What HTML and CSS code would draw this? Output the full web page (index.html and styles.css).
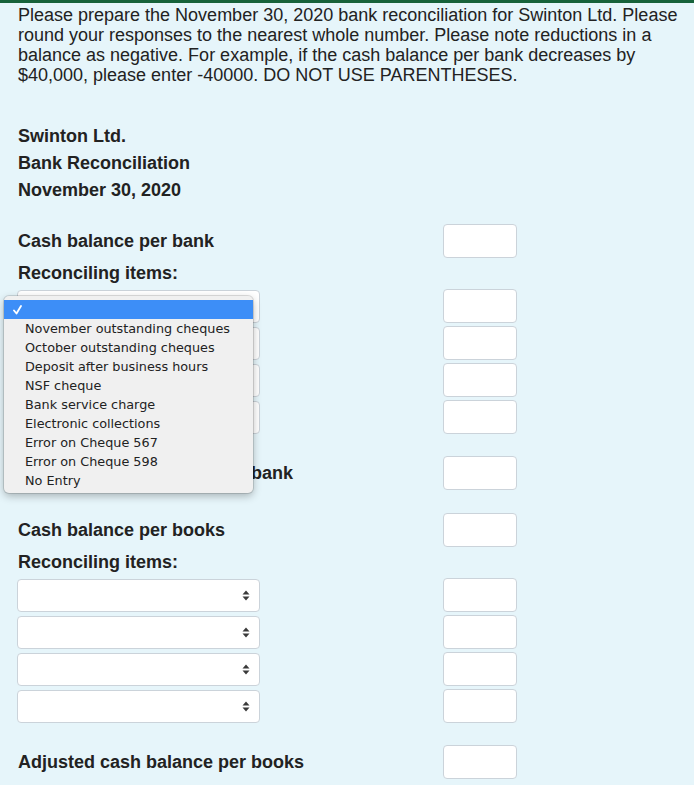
FILE: index.html
```html
<!DOCTYPE html>
<html>
<head>
<meta charset="utf-8">
<link rel="stylesheet" href="styles.css">
</head>
<body>
<div class="page">
  <p class="intro">Please prepare the November 30, 2020 bank reconciliation for Swinton Ltd. Please round your responses to the nearest whole number. Please note reductions in a balance as negative. For example, if the cash balance per bank decreases by $40,000, please enter -40000. DO NOT USE PARENTHESES.</p>

  <div class="heading">
    <div>Swinton Ltd.</div>
    <div>Bank Reconciliation</div>
    <div>November 30, 2020</div>
  </div>

  <div class="form">
    <div class="row first"><span class="label">Cash balance per bank</span><input class="amount" type="text"></div>
    <div class="label-row"><span class="label">Reconciling items:</span></div>
    <div class="group">
      <div class="row"><span class="sel"><select></select><svg class="arrows" width="8" height="11" viewBox="0 0 8 11"><path d="M4 0.5 L7.5 4.5 L0.5 4.5 Z M4 10.5 L7.5 6.5 L0.5 6.5 Z" fill="#3a3a3a"/></svg></span><input class="amount" type="text"></div>
      <div class="row"><span class="sel"><select></select><svg class="arrows" width="8" height="11" viewBox="0 0 8 11"><path d="M4 0.5 L7.5 4.5 L0.5 4.5 Z M4 10.5 L7.5 6.5 L0.5 6.5 Z" fill="#3a3a3a"/></svg></span><input class="amount" type="text"></div>
      <div class="row"><span class="sel"><select></select><svg class="arrows" width="8" height="11" viewBox="0 0 8 11"><path d="M4 0.5 L7.5 4.5 L0.5 4.5 Z M4 10.5 L7.5 6.5 L0.5 6.5 Z" fill="#3a3a3a"/></svg></span><input class="amount" type="text"></div>
      <div class="row"><span class="sel"><select></select><svg class="arrows" width="8" height="11" viewBox="0 0 8 11"><path d="M4 0.5 L7.5 4.5 L0.5 4.5 Z M4 10.5 L7.5 6.5 L0.5 6.5 Z" fill="#3a3a3a"/></svg></span><input class="amount" type="text"></div>
    </div>
    <div class="row spaced"><span class="label">Adjusted cash balance per bank</span><input class="amount" type="text"></div>
    <div class="row spaced"><span class="label">Cash balance per books</span><input class="amount" type="text"></div>
    <div class="label-row"><span class="label">Reconciling items:</span></div>
    <div class="group">
      <div class="row"><span class="sel"><select></select><svg class="arrows" width="8" height="11" viewBox="0 0 8 11"><path d="M4 0.5 L7.5 4.5 L0.5 4.5 Z M4 10.5 L7.5 6.5 L0.5 6.5 Z" fill="#3a3a3a"/></svg></span><input class="amount" type="text"></div>
      <div class="row"><span class="sel"><select></select><svg class="arrows" width="8" height="11" viewBox="0 0 8 11"><path d="M4 0.5 L7.5 4.5 L0.5 4.5 Z M4 10.5 L7.5 6.5 L0.5 6.5 Z" fill="#3a3a3a"/></svg></span><input class="amount" type="text"></div>
      <div class="row"><span class="sel"><select></select><svg class="arrows" width="8" height="11" viewBox="0 0 8 11"><path d="M4 0.5 L7.5 4.5 L0.5 4.5 Z M4 10.5 L7.5 6.5 L0.5 6.5 Z" fill="#3a3a3a"/></svg></span><input class="amount" type="text"></div>
      <div class="row"><span class="sel"><select></select><svg class="arrows" width="8" height="11" viewBox="0 0 8 11"><path d="M4 0.5 L7.5 4.5 L0.5 4.5 Z M4 10.5 L7.5 6.5 L0.5 6.5 Z" fill="#3a3a3a"/></svg></span><input class="amount" type="text"></div>
    </div>
    <div class="row spaced"><span class="label">Adjusted cash balance per books</span><input class="amount" type="text"></div>
  </div>

  <ul class="popup">
    <li class="opt selected"><svg class="check" width="9" height="10" viewBox="0 0 9 10"><path d="M1 5.5 L3.5 8.5 L8 1" fill="none" stroke="#fff" stroke-width="1.8" stroke-linecap="round" stroke-linejoin="round"/></svg></li>
    <li class="opt">November outstanding cheques</li>
    <li class="opt">October outstanding cheques</li>
    <li class="opt">Deposit after business hours</li>
    <li class="opt">NSF cheque</li>
    <li class="opt">Bank service charge</li>
    <li class="opt">Electronic collections</li>
    <li class="opt">Error on Cheque 567</li>
    <li class="opt">Error on Cheque 598</li>
    <li class="opt">No Entry</li>
  </ul>
</div>
</body>
</html>
```

FILE: styles.css
```css
html, body {
  margin: 0;
  padding: 0;
  background: #e6f5fa;
}
body {
  border-top: 3px solid #16623a;
  font-family: "Liberation Sans", Arial, sans-serif;
  color: #222;
}
.page {
  position: relative;
  padding: 2px 8px 0 18px;
  height: 782px;
  box-sizing: border-box;
}
.intro {
  margin: 0;
  font-size: 18px;
  line-height: 20px;
}
.heading {
  margin-top: 38px;
  font-size: 18px;
  font-weight: bold;
  line-height: 27px;
}
.form {
  display: flex;
  flex-direction: column;
  margin-top: 20px;
  margin-left: -1px;
}
.row {
  display: grid;
  grid-template-columns: 426px 74px;
  align-items: center;
  height: 34px;
}
.group {
  display: flex;
  flex-direction: column;
  gap: 3px;
}
.spaced {
  margin-top: 23px;
}
.label-row {
  display: flex;
  align-items: center;
  height: 30px;
}
.label {
  font-size: 18px;
  font-weight: bold;
  padding-left: 1px;
}
.amount {
  box-sizing: border-box;
  width: 74px;
  height: 34px;
  margin: 0;
  background: #fff;
  border: 1px solid #cbd3da;
  border-radius: 4px;
}
.sel {
  position: relative;
  align-self: start;
  margin-top: 2px;
  width: 243px;
  height: 33px;
}
.sel select {
  -webkit-appearance: none;
  appearance: none;
  box-sizing: border-box;
  width: 243px;
  height: 33px;
  margin: 0;
  background: #fff;
  border: 1px solid #cbd3da;
  border-radius: 4px;
}
.arrows {
  position: absolute;
  right: 10px;
  top: 11px;
}
.popup {
  position: absolute;
  left: 4px;
  top: 293px;
  width: 249px;
  height: 197px;
  box-sizing: border-box;
  margin: 0;
  padding: 4px 0 3px;
  list-style: none;
  background: #f0f0f0;
  border-radius: 5px;
  box-shadow: 0 0 0 1px rgba(0,0,0,0.12), 0 3px 8px rgba(0,0,0,0.28);
  font-family: "DejaVu Sans", "Liberation Sans", sans-serif;
  font-size: 12.8px;
  color: #222;
}
.opt {
  height: 19px;
  line-height: 19px;
  padding-left: 21px;
  white-space: nowrap;
}
.selected {
  display: flex;
  align-items: center;
  background: #3d8ef7;
  padding-left: 9px;
}
.check {
  display: block;
}
```
